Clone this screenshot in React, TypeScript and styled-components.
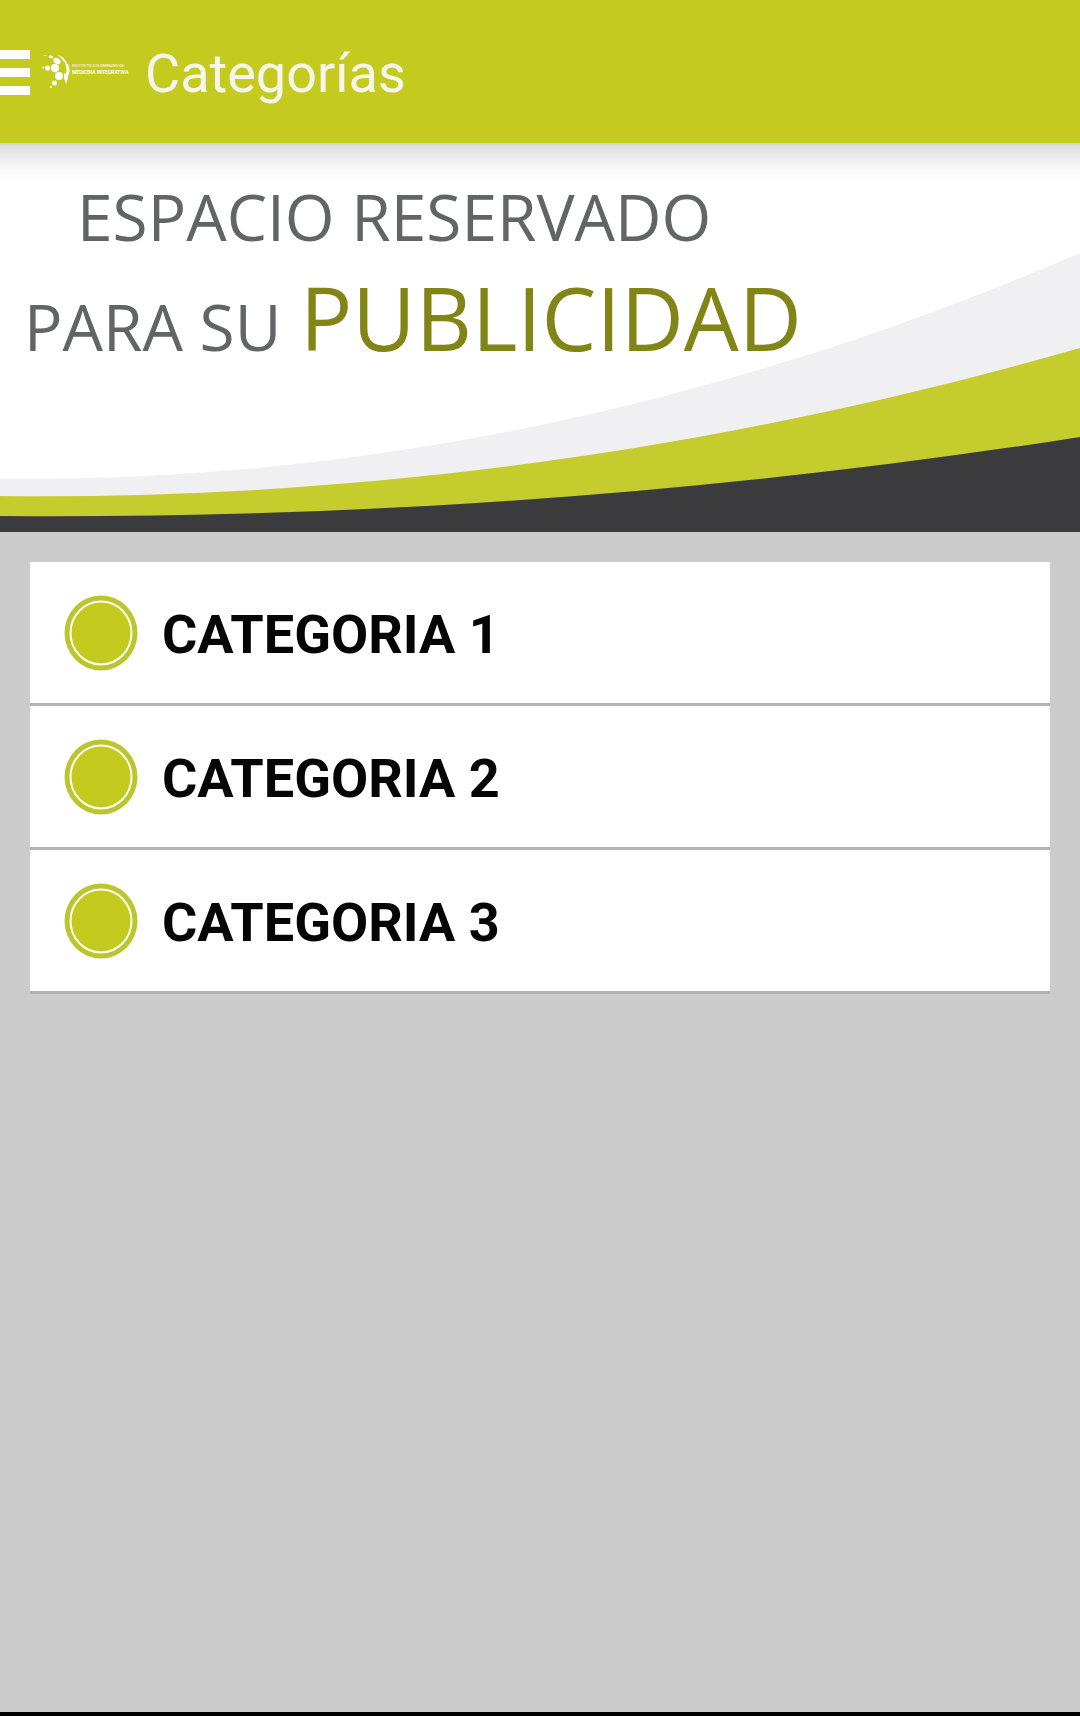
import React from "react";
import styled, { createGlobalStyle } from "styled-components";

const GlobalStyle = createGlobalStyle`
  *, *::before, *::after { box-sizing: border-box; }
  body { margin: 0; background: #cccccc; font-family: Roboto, "Liberation Sans", sans-serif; }
`;

const Screen = styled.div`
  min-height: 100vh;
  display: flex;
  flex-direction: column;
  background: #cccccc;
  border-bottom: 4px solid #000;
`;

const TopBar = styled.header`
  height: 143px;
  padding-top: 2px;
  display: flex;
  align-items: center;
  background: #c5cb1e;
`;

const MenuButton = styled.button`
  width: 30px;
  height: 48px;
  padding: 0;
  border: 0;
  background: none;
  display: flex;
  flex-direction: column;
  justify-content: center;
  gap: 9px;
  cursor: pointer;
`;

const MenuBar = styled.span`
  display: block;
  height: 9px;
  background: #fff;
`;

const Logo = styled.svg`
  display: block;
  width: 92px;
  height: 48px;
  margin-left: 10px;
`;

const LogoText = styled.text<{ $strong?: boolean }>`
  fill: #fff;
  font-family: Roboto, "Liberation Sans", sans-serif;
  font-size: ${(p) => (p.$strong ? 5 : 4)}px;
  font-weight: ${(p) => (p.$strong ? 700 : 400)};
`;

const Title = styled.h1`
  margin: 0 0 0 13px;
  padding-top: 2px;
  color: #f6f5ee;
  font-size: 54px;
  line-height: 64px;
  font-weight: 400;
`;

const Banner = styled.section`
  position: relative;
  height: 389px;
  padding: 24px;
  background: #fff;
  overflow: hidden;

  &::before {
    content: "";
    position: absolute;
    inset: 0 0 auto;
    height: 40px;
    background: linear-gradient(#cfcfcf 0, #dedede 3px, #efefef 16px, #fafafa 28px, #fff 40px);
  }
`;

const Waves = styled.svg`
  position: absolute;
  inset: 0;
  width: 100%;
  height: 100%;
`;

const Slogan = styled.p`
  position: relative;
  margin: 0;
  display: flex;
  flex-direction: column;
  font-family: "Open Sans", "Noto Sans", sans-serif;
  font-size: 64px;
  font-weight: 450;
  line-height: 100px;
  color: #636466;
  white-space: nowrap;
`;

const SloganLine = styled.span<{ $indent?: boolean }>`
  padding-left: ${(p) => (p.$indent ? 53 : 0)}px;
`;

const Highlight = styled.span`
  margin-left: 2px;
  font-size: 87px;
  color: #808515;
`;

const List = styled.ul`
  list-style: none;
  margin: 30px;
  padding: 0;
`;

const Item = styled.li`
  background: #fff;
  border-bottom: 3px solid #b3b3b3;
`;

const ItemLink = styled.a`
  height: 141px;
  padding: 0 34px;
  display: flex;
  align-items: center;
  gap: 24px;
  color: #050505;
  font-size: 54px;
  line-height: 64px;
  font-weight: 700;
  text-decoration: none;
`;

const ItemLabel = styled.span`
  padding-top: 5px;
`;

const Badge = styled.svg`
  display: block;
  width: 74px;
  height: 76px;
  flex: none;
`;

const categories = ["CATEGORIA 1", "CATEGORIA 2", "CATEGORIA 3"];

export default function App() {
  return (
    <Screen>
      <GlobalStyle />
      <TopBar>
        <MenuButton aria-label="Menú">
          <MenuBar />
          <MenuBar />
          <MenuBar />
        </MenuButton>
        <Logo viewBox="0 1 92 48" role="img" aria-label="Medicina Integrativa">
          <g fill="#fff">
            <circle cx="15" cy="20" r="4.2" />
            <circle cx="19" cy="28" r="4" />
            <ellipse cx="17" cy="13" rx="3.8" ry="2.8" transform="rotate(35 17 13)" />
            <circle cx="7.5" cy="20" r="2.6" />
            <circle cx="14.5" cy="35" r="2.5" />
            <circle cx="3" cy="19.5" r="1" />
            <circle cx="11" cy="39" r="1" />
            <ellipse cx="11" cy="9" rx="2.4" ry="1.2" transform="rotate(15 11 9)" />
            <ellipse cx="5" cy="7.5" rx="1.2" ry="0.6" />
            <path d="M18 7c4 1 7 4 9 8l-3-1c-1-2-2-3-4-5z" />
            <path d="M25 15l3 1c2 5 2 8 0 12l-3 1c2-5 2-9 0-14z" />
            <path d="M24 25l4 2c0 4-1 6-2 9l-1-4-1-1z" />
          </g>
          <LogoText x="32" y="19">INSTITUTO COLOMBIANO DE</LogoText>
          <LogoText x="32" y="26" $strong>MEDICINA INTEGRATIVA</LogoText>
        </Logo>
        <Title>Categorías</Title>
      </TopBar>
      <main>
        <Banner>
          <Waves viewBox="0 0 1080 389" preserveAspectRatio="none" aria-hidden="true">
            <path fill="#f0f0f2" d="M0 336C360 339 720 265 1080 110V389H0z" />
            <path fill="#c4cc2e" d="M0 353C360 357 720 308 1080 205V389H0z" />
            <path fill="#3b3a3c" d="M0 373C360 376 720 350 1080 294V389H0z" />
          </Waves>
          <Slogan>
            <SloganLine $indent>ESPACIO RESERVADO</SloganLine>
            <SloganLine>
              PARA SU <Highlight>PUBLICIDAD</Highlight>
            </SloganLine>
          </Slogan>
        </Banner>
        <List>
          {categories.map((name) => (
            <Item key={name}>
              <ItemLink href="#">
                <Badge viewBox="0 0 74 76" aria-hidden="true">
                  <ellipse cx="37" cy="38" rx="36.5" ry="37.5" fill="#bcc62c" />
                  <ellipse cx="37" cy="38" rx="30.5" ry="31.5" fill="#c5cb1e" stroke="#fff" strokeWidth="2" />
                </Badge>
                <ItemLabel>{name}</ItemLabel>
              </ItemLink>
            </Item>
          ))}
        </List>
      </main>
    </Screen>
  );
}
